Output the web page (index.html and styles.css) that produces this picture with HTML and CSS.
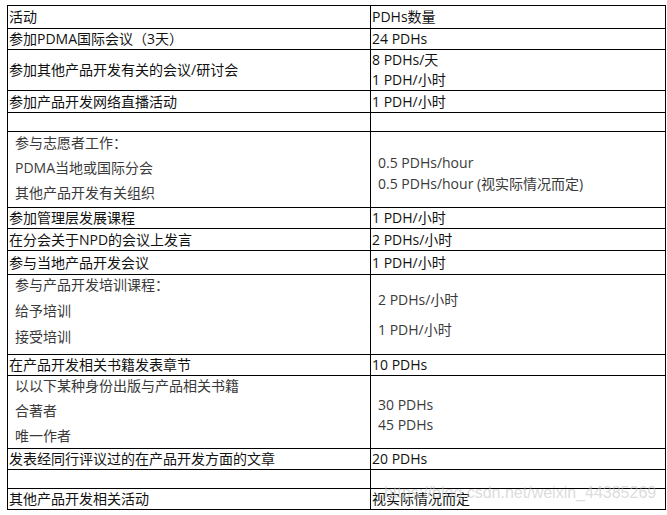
FILE: index.html
```html
<!DOCTYPE html>
<html lang="zh-CN">
<head>
<meta charset="utf-8">
<title>PDHs</title>
<link rel="stylesheet" href="styles.css">
</head>
<body>
<div class="page">
<table class="pdh">
  <colgroup><col class="c1"><col class="c2"></colgroup>
  <tr class="h23"><td>活动</td><td>PDHs数量</td></tr>
  <tr class="h21"><td>参加PDMA国际会议（3天）</td><td>24 PDHs</td></tr>
  <tr class="h41"><td>参加其他产品开发有关的会议/研讨会</td><td>8 PDHs/天<br>1 PDH/小时</td></tr>
  <tr class="h22"><td>参加产品开发网络直播活动</td><td>1 PDH/小时</td></tr>
  <tr class="h19"><td></td><td></td></tr>
  <tr class="h76">
    <td class="top"><div class="sub s1"><p>参与志愿者工作：</p><p>PDMA当地或国际分会</p><p>其他产品开发有关组织</p></div></td>
    <td><div class="sub r1"><p>0.5 PDHs/hour</p><p>0.5 PDHs/hour (视实际情况而定)</p></div></td>
  </tr>
  <tr class="h21"><td>参加管理层发展课程</td><td>1 PDH/小时</td></tr>
  <tr class="h22"><td>在分会关于NPD的会议上发言</td><td>2 PDHs/小时</td></tr>
  <tr class="h24"><td>参与当地产品开发会议</td><td>1 PDH/小时</td></tr>
  <tr class="h80">
    <td class="top"><div class="sub s2"><p>参与产品开发培训课程：</p><p>给予培训</p><p>接受培训</p></div></td>
    <td><div class="sub r2"><p>2 PDHs/小时</p><p>1 PDH/小时</p></div></td>
  </tr>
  <tr class="h20"><td>在产品开发相关书籍发表章节</td><td>10 PDHs</td></tr>
  <tr class="h73">
    <td class="top"><div class="sub s3"><p>以以下某种身份出版与产品相关书籍</p><p>合著者</p><p>唯一作者</p></div></td>
    <td><div class="sub r3"><p>30 PDHs</p><p>45 PDHs</p></div></td>
  </tr>
  <tr class="h21"><td>发表经同行评议过的在产品开发方面的文章</td><td>20 PDHs</td></tr>
  <tr class="h19"><td></td><td></td></tr>
  <tr class="h21"><td>其他产品开发相关活动</td><td>视实际情况而定</td></tr>
</table>
<span class="mark">https://blog.csdn.net/weixin_44385269</span>
</div>
</body>
</html>
```

FILE: styles.css
```css
html, body {
  margin: 0;
  padding: 0;
  background: #fff;
}
.page {
  position: relative;
  padding: 5px 0 0 7px;
  font-family: "Open Sans", "Noto Sans CJK SC", sans-serif;
  font-size: 14px;
  color: #111;
}
.pdh {
  border-collapse: collapse;
  table-layout: fixed;
  width: 658px;
}
.c1 { width: 363px; }
.c2 { width: 295px; }
.pdh td {
  border: 1px solid #000;
  padding: 0 0 0 1px;
  line-height: 20px;
  vertical-align: middle;
  white-space: nowrap;
}
.pdh td.top { vertical-align: top; }
.h19 { height: 19px; }
.h20 { height: 20px; }
.h21 { height: 21px; }
.h22 { height: 22px; }
.h23 { height: 23px; }
.h24 { height: 24px; }
.h41 { height: 41px; }
.h73 { height: 73px; }
.h76 { height: 76px; }
.h80 { height: 80px; }
.sub { color: #3a3a3a; padding-left: 6px; }
.sub p { margin: 0; line-height: 20px; }
.s1 p { margin-bottom: 5px; }
.s1 { padding-top: 1px; }
.s2 p { margin-bottom: 6px; }
.s3 p { margin-bottom: 5px; }
.sub p:last-child { margin-bottom: 0; }
.r1 p { line-height: 21px; }
.r1 { padding-top: 6px; }
.r2 p { margin-bottom: 10px; }
.r2 { padding-top: 0; }
.r3 { padding-top: 6px; }
.mark {
  position: absolute;
  left: 384px;
  top: 484px;
  font-family: "Liberation Sans", sans-serif;
  font-size: 16px;
  color: rgba(190, 190, 190, 0.55);
  white-space: nowrap;
  pointer-events: none;
}
```
